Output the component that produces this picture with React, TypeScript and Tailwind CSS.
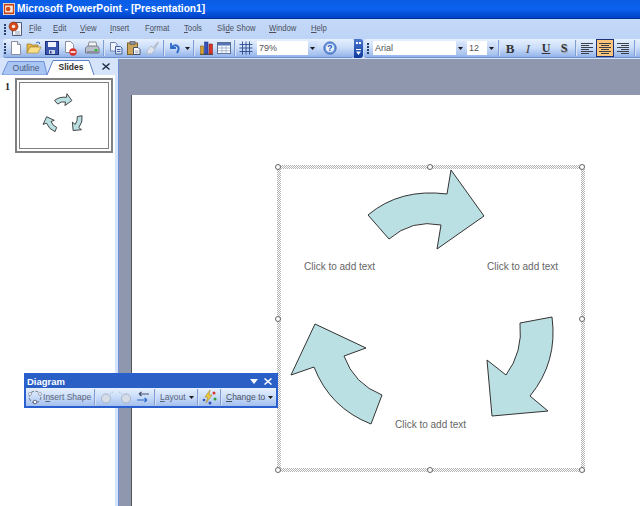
import React from "react";

const ui = { fontFamily: '"Liberation Sans", Arial, sans-serif' };

const Grip = ({ className = "" }: { className?: string }) => (
  <div className={`flex flex-col gap-[1px] shrink-0 w-[4px] items-center ${className}`}>
    <i className="block w-[2px] h-[2px] bg-[#27416f]" />
    <i className="block w-[2px] h-[2px] bg-[#27416f]" />
    <i className="block w-[2px] h-[2px] bg-[#27416f]" />
    <i className="block w-[2px] h-[2px] bg-[#27416f]" />
  </div>
);

const Sep = ({ w }: { w: string }) => (
  <div className={`flex justify-center shrink-0 ${w}`}>
    <i className="block w-[1px] h-[16px] bg-[#7f9ed6] border-r border-white/70 box-content" />
  </div>
);

const Btn = ({ children, className = "" }: { children: React.ReactNode; className?: string }) => (
  <div className={`w-[18px] h-[18px] flex items-center justify-center shrink-0 ${className}`}>{children}</div>
);

const Ic = ({ children, s = 16 }: { children: React.ReactNode; s?: number }) => (
  <svg width={s} height={s} viewBox="0 0 16 16">{children}</svg>
);

const Caret = () => (
  <svg width="5" height="3" viewBox="0 0 5 3" className="shrink-0"><path d="M0 0h5L2.500 3z" fill="#1a1a1a" /></svg>
);

const NewI = () => (
  <Ic><path d="M3.500 1.500h6l3 3v10h-9z" fill="#fff" stroke="#8a8f9c" /><path d="M9.500 1.500v3h3" fill="#dfe7f5" stroke="#8a8f9c" /></Ic>
);
const OpenI = () => (
  <Ic><path d="M1 13V4h4l1 1h6v2H4L1 13z" fill="#e6b64a" stroke="#9a7a24" strokeWidth=".7" /><path d="M1 13l3-6h11l-3 6z" fill="#fbe08a" stroke="#b08a2c" strokeWidth=".7" /><path d="M10 3q2-2 4 0l-1 1" fill="none" stroke="#3f6fc0" /></Ic>
);
const SaveI = () => (
  <Ic><rect x="1.500" y="1.500" width="13" height="13" fill="#3a55ae" stroke="#1d2f78" /><rect x="4" y="2" width="8" height="5" fill="#eef3fb" /><rect x="5" y="10" width="6" height="4" fill="#c9d3e8" /><rect x="6" y="11" width="1.500" height="2.500" fill="#2a3f8e" /></Ic>
);
const PermI = () => (
  <Ic><path d="M3.500 1.500h5l3 3v8h-8z" fill="#fff" stroke="#8a8f9c" /><circle cx="11" cy="12" r="3.700" fill="#d8302a" /><rect x="8.600" y="11.200" width="4.800" height="1.600" fill="#fff" /></Ic>
);
const PrintI = () => (
  <Ic><path d="M5 2h7l1 5H4z" fill="#f2f2f2" stroke="#767b88" strokeWidth=".8" /><path d="M1.500 8l2-2h10l1.500 2v5h-13.500z" fill="#b9bfcb" stroke="#636875" strokeWidth=".8" /><rect x="3" y="11" width="11" height="2.500" fill="#8a909e" /><rect x="10.500" y="9" width="3" height="2" fill="#36c03a" /></Ic>
);
const CopyI = () => (
  <Ic><path d="M2.500 2.500h5l1.500 1.500v7h-6.500z" fill="#eef3fb" stroke="#6e84ac" /><path d="M7.500 6.500h5l1.500 1.500v6h-6.500z" fill="#dce7f8" stroke="#45609a" /><path d="M9 9.500h3.500M9 11.500h3.500" stroke="#45609a" /></Ic>
);
const PasteI = () => (
  <Ic><rect x="1.500" y="3" width="10" height="11.500" fill="#c9a45a" stroke="#7d6228" /><rect x="4" y="1.500" width="5" height="3" fill="#8a8f9c" stroke="#555" strokeWidth=".6" /><path d="M7.500 7.500h4.500l2 2v5h-6.500z" fill="#fff" stroke="#46506a" /><path d="M9 11h3.500M9 12.800h3.500" stroke="#9aa5bc" /></Ic>
);
const PainterI = () => (
  <Ic><path d="M9 7l5-5.500 1 1L11 9z" fill="#b4bccb" /><path d="M3 14q-1-4 4-8l4 4q-3 5-8 4z" fill="#dee3ec" stroke="#aeb6c6" strokeWidth=".8" /></Ic>
);
const UndoI = () => (
  <Ic><path d="M4 3v5h5" fill="none" stroke="#2f6bc9" strokeWidth="1.800" /><path d="M4.500 7.500q3-3.500 6-1.500 2.500 2-.5 7" fill="none" stroke="#2f6bc9" strokeWidth="2" /></Ic>
);
const ChartI = () => (
  <Ic><rect x="2" y="14" width="13" height="1" fill="#555" /><rect x="2.500" y="6" width="3" height="8" fill="#d8a02a" stroke="#7a5d15" strokeWidth=".5" /><rect x="6.500" y="2" width="3.500" height="12" fill="#3452b6" stroke="#1d2f78" strokeWidth=".5" /><rect x="11" y="4" width="3.500" height="10" fill="#d8342a" stroke="#7a1d15" strokeWidth=".5" /></Ic>
);
const TableI = () => (
  <Ic><rect x="1.500" y="2.500" width="13" height="11" fill="#fff" stroke="#5a6f9a" /><rect x="2" y="3" width="12" height="2.500" fill="#5475b5" /><path d="M2 8h12M2 10.800h12M6 5.500v8M10 5.500v8" stroke="#9db0d2" strokeWidth=".9" /></Ic>
);
const GridI = () => (
  <Ic><path d="M1.500 4.500h13M1.500 8h13M1.500 11.500h13M4.500 1.500v13M8 1.500v13M11.500 1.500v13" stroke="#2d4a90" strokeWidth=".9" /></Ic>
);
const HelpI = () => (
  <svg width="14" height="14" viewBox="0 0 16 16">
    <circle cx="8" cy="8" r="7" fill="#6f9ade" stroke="#2f5fb0" />
    <circle cx="8" cy="8" r="4.700" fill="#eaf2fd" />
    <text x="8" y="11.500" textAnchor="middle" fontSize="10" fontWeight="700" fill="#1f52b0" style={ui}>?</text>
  </svg>
);
const AlignI = ({ kind }: { kind: "l" | "c" | "r" }) => {
  const d = {
    l: "M2 3.500h12M2 5.500h8M2 7.500h12M2 9.500h8M2 11.500h12M2 13.500h8",
    c: "M2 3.500h12M4 5.500h8M2 7.500h12M4 9.500h8M2 11.500h12M4 13.500h8",
    r: "M2 3.500h12M6 5.500h8M2 7.500h12M6 9.500h8M2 11.500h12M6 13.500h8",
  }[kind];
  return <Ic><path d={d} stroke="#3c4048" strokeWidth="1" /></Ic>;
};
const InsertShapeI = () => (
  <Ic><circle cx="8" cy="8" r="5.800" fill="none" stroke="#7a8496" strokeWidth="1.100" strokeDasharray="3 1.500" /><circle cx="8" cy="13" r="1.800" fill="#fff" stroke="#47506a" strokeWidth=".8" /><circle cx="3" cy="5" r="1.500" fill="#fff" stroke="#8a93a6" strokeWidth=".8" /><circle cx="13" cy="5" r="1.500" fill="#fff" stroke="#8a93a6" strokeWidth=".8" /></Ic>
);
const BackI = ({ flip }: { flip?: boolean }) => (
  <Ic>
    <g transform={flip ? "translate(16,0) scale(-1,1)" : undefined}>
      <circle cx="7" cy="9.500" r="4.500" fill="#d7dde8" stroke="#aab3c4" />
      <path d="M11 5q1.500-1.500 3-2" fill="none" stroke="#a9b3c6" strokeDasharray="1.500 1" />
    </g>
  </Ic>
);
const ReverseI = () => (
  <Ic><path d="M4 5h10M4 5l2.500-2M4 5l2.500 2" fill="none" stroke="#46506a" strokeWidth="1.200" /><path d="M12 11H2M12 11l-2.500-2M12 11l-2.500 2" fill="none" stroke="#2f6bc9" strokeWidth="1.200" /></Ic>
);
const AutoI = () => (
  <Ic><path d="M9 1L4 8h3l-2 6 6-8H8z" fill="#f5cf3c" stroke="#a5851c" strokeWidth=".6" /><circle cx="13" cy="4" r="1.500" fill="#d8342a" /><circle cx="14" cy="10" r="1.500" fill="#36a03a" /><circle cx="9" cy="14" r="1.500" fill="#3452b6" /><circle cx="3" cy="11" r="1.300" fill="#3452b6" /></Ic>
);

const AppIcon = () => (
  <svg width="12" height="12" viewBox="0 0 14 14" className="shrink-0">
    <rect x=".5" y=".5" width="13" height="13" fill="#c8421a" stroke="#f4e2d0" />
    <rect x="2.500" y="3" width="9" height="8" fill="#f6e8da" />
    <circle cx="6" cy="7" r="2.700" fill="#d2491c" />
  </svg>
);
const DocIcon = () => (
  <svg width="14" height="16" viewBox="0 0 14 16" className="shrink-0">
    <path d="M4.500 1.500h9v13h-9z" fill="#f5f7fc" stroke="#505a72" />
    <circle cx="5.500" cy="5.500" r="4.500" fill="#d2491c" stroke="#7a2a10" strokeWidth=".5" />
    <circle cx="5.500" cy="5.500" r="1.800" fill="#f7e4d4" />
    <path d="M7 11h5M7 13h5" stroke="#9aa5bc" />
  </svg>
);

const ArrowsSvg = ({ size, sw = 1 }: { size: number; sw?: number }) => (
  <svg width={size} height={size} viewBox="277 165 308 308" className="block">
    <g fill="#bbe0e3" stroke="#333" strokeWidth={sw}>
      <path d="M368 215Q400 188 447 194L451 170L484 216L437 249L441 225Q412 219 389 239Z" />
      <path d="M552 317Q558 362 530 396L548 411L492 416L487 360L506 375Q523 352 520 323Z" />
      <path d="M315 324L366 348L344 356Q354 384 382 395L371 424Q330 408 314 367L291 375Z" />
    </g>
  </svg>
);

const menus = [
  { u: "F", r: "ile", w: "w-[24px]" },
  { u: "E", r: "dit", w: "w-[27px]" },
  { u: "V", r: "iew", w: "w-[30px]" },
  { u: "I", r: "nsert", w: "w-[35px]" },
  { p: "F", u: "o", r: "rmat", w: "w-[39px]" },
  { u: "T", r: "ools", w: "w-[33px]" },
  { p: "Sli", u: "d", r: "e Show", w: "w-[52px]" },
  { u: "W", r: "indow", w: "w-[42px]" },
  { u: "H", r: "elp", w: "w-[30px]" },
];

const Combo = ({ text, w }: { text: string; w: string }) => (
  <div className={`h-[14px] flex bg-white shrink-0 ${w}`}>
    <span className="flex-1 pl-[2px] text-[9px] leading-[14px] text-[#555]">{text}</span>
    <div className="w-[9px] bg-gradient-to-b from-[#dbe7fb] to-[#a8c3ef] flex items-center justify-center">
      <Caret />
    </div>
  </div>
);

const Handle = ({ className }: { className: string }) => (
  <i className={`absolute block w-[6px] h-[6px] rounded-full bg-white border border-[#666] ${className}`} />
);

export default function App() {
  return (
    <div style={ui} className="relative w-[640px] h-[506px] overflow-hidden flex flex-col bg-[#8f97ae]">
      {/* Title bar */}
      <div className="h-[19px] shrink-0 flex items-center gap-[2px] pl-[3px] bg-gradient-to-b from-[#0a5ce4] via-[#0c62ee] to-[#0040c4] border-b border-[#00309c]">
        <AppIcon />
        <span className="inline-block origin-left scale-x-[.887] text-[11.5px] font-bold text-white leading-none whitespace-nowrap">Microsoft PowerPoint - [Presentation1]</span>
      </div>

      {/* Menu bar */}
      <div className="h-[20px] shrink-0 flex items-center bg-gradient-to-b from-[#c4d9f8] to-[#bed4f6]">
        <Grip className="ml-[3px]" />
        <div className="w-[15px] ml-[1px] shrink-0"><DocIcon /></div>
        <div className="w-[6px] shrink-0" />
        {menus.map((m) => (
          <div key={m.r} className={`shrink-0 h-[20px] pb-[2px] flex items-center ${m.w}`}>
            <span className="block origin-left scale-x-[.81] text-[9.5px] leading-none text-[#4a4f5c] whitespace-nowrap">
              {m.p}<u>{m.u}</u>{m.r}
            </span>
          </div>
        ))}
      </div>

      {/* Toolbars */}
      <div className="h-[20px] shrink-0 flex items-stretch bg-[#c4d9f8] border-b border-[#d6e4f9]">
        <div className="ml-[3px] w-[351px] shrink-0 flex items-center rounded-[3px] bg-gradient-to-b from-[#e6f0fd] via-[#c9dcf9] to-[#93b3e8] border-b border-[#6e8fce]">
          <Grip />
          <Btn><NewI /></Btn>
          <Btn><OpenI /></Btn>
          <Btn><SaveI /></Btn>
          <Btn><PermI /></Btn>
          <div className="w-[4px] shrink-0" />
          <Btn><PrintI /></Btn>
          <Sep w="w-[6px]" />
          <Btn><CopyI /></Btn>
          <Btn><PasteI /></Btn>
          <Btn><PainterI /></Btn>
          <Sep w="w-[5px]" />
          <Btn><UndoI /></Btn>
          <div className="w-[7px] flex justify-center shrink-0"><Caret /></div>
          <Sep w="w-[6px]" />
          <Btn><ChartI /></Btn>
          <Btn><TableI /></Btn>
          <Sep w="w-[4px]" />
          <Btn><GridI /></Btn>
          <div className="w-[2px] shrink-0" />
          <Combo text="79%" w="w-[60px]" />
          <div className="w-[4px] shrink-0" />
          <Btn><HelpI /></Btn>
        </div>
        <div className="w-[9px] shrink-0 flex flex-col items-center justify-between py-[3px] rounded-r-[3px] bg-gradient-to-b from-[#4a78d0] to-[#10389c]">
          <div className="flex gap-[1px]">
            <i className="block w-[2px] h-[2px] bg-white" />
            <i className="block w-[2px] h-[2px] bg-white" />
          </div>
          <svg width="5" height="6" viewBox="0 0 5 6"><path d="M0 0h5v1H0zM0 2.500h5L2.500 6z" fill="#fff" /></svg>
        </div>
        <div className="ml-[1px] flex-1 flex items-center rounded-l-[3px] bg-gradient-to-b from-[#e6f0fd] via-[#c9dcf9] to-[#93b3e8] border-b border-[#6e8fce] pl-[2px]">
          <Grip />
          <div className="w-[3px] shrink-0" />
          <Combo text="Arial" w="w-[92px]" />
          <div className="w-[2px] shrink-0" />
          <Combo text="12" w="w-[29px]" />
          <Sep w="w-[5px]" />
          <Btn><span className="text-[13px] font-bold leading-none text-[#333]" style={{ fontFamily: '"Liberation Serif", serif' }}>B</span></Btn>
          <Btn><span className="text-[13px] italic leading-none text-[#444]" style={{ fontFamily: '"Liberation Serif", serif' }}>I</span></Btn>
          <Btn><span className="text-[12px] font-bold underline leading-none text-[#333]" style={{ fontFamily: '"Liberation Serif", serif' }}>U</span></Btn>
          <Btn><span className="text-[12px] font-bold leading-none text-[#333] [text-shadow:1px_1px_0_#999]" style={{ fontFamily: '"Liberation Serif", serif' }}>S</span></Btn>
          <Sep w="w-[5px]" />
          <Btn><AlignI kind="l" /></Btn>
          <div className="w-[18px] h-[18px] flex items-center justify-center shrink-0 bg-[#fcc57a] border border-[#1f2f78]"><AlignI kind="c" /></div>
          <Btn><AlignI kind="r" /></Btn>
          <Sep w="w-[5px]" />
        </div>
      </div>

      {/* Main */}
      <div className="flex-1 flex min-h-0">
        {/* Left panel */}
        <div className="w-[119px] shrink-0 flex flex-col bg-[#d6e4fb] border-r border-[#6d90d6] pr-[3px]">
          <div className="h-[16px] shrink-0 flex items-end relative pl-[2px]">
            <div className="relative w-[45px] h-[14px] flex items-center justify-center">
              <svg className="absolute inset-0" width="45" height="14" viewBox="0 0 45 14"><path d="M0 14L6 .5h36l3 13.500z" fill="#a9c5f3" stroke="#6d90d6" /></svg>
              <span className="relative text-[8.5px] text-[#4a5a78] pl-[3px]">Outline</span>
            </div>
            <div className="relative w-[48px] h-[15px] flex items-center justify-center">
              <svg className="absolute inset-0" width="48" height="15" viewBox="0 0 48 15"><path d="M0 15L6 .5h36l5 14.500" fill="#fff" stroke="#5a7fc8" /></svg>
              <span className="relative text-[8.5px] font-bold text-[#333]">Slides</span>
            </div>
            <svg className="absolute left-[102px] top-[4px]" width="8" height="7" viewBox="0 0 8 7"><path d="M.5.5l7 6M7.500.5l-7 6" stroke="#1a2440" strokeWidth="1.300" /></svg>
          </div>
          <div className="flex-1 bg-white flex items-start pt-[3px]">
            <span className="w-[15px] shrink-0 text-center text-[10px] font-bold leading-none pt-[4px] text-[#222]" style={{ fontFamily: '"Liberation Serif", serif' }}>1</span>
            <div className="w-[98px] h-[75px] shrink-0 border-[2px] border-[#808080] p-[2px] bg-white">
              <div className="w-full h-full border border-[#808080] flex items-center justify-center">
                <ArrowsSvg size={46} sw={6} />
              </div>
            </div>
          </div>
        </div>

        {/* Workspace */}
        <div className="flex-1 min-w-0 pl-[12px] pt-[36px]">
          <div className="relative w-full h-full bg-white border-l border-[#555]">
            {/* Diagram frame on the slide canvas */}
            <div className="absolute left-[145px] top-[70px] w-[308px] h-[307px] p-[4px] [background-image:repeating-conic-gradient(#b4b4b4_0_25%,#ffffff_0_50%)] [background-size:2px_2px]">
              <div className="w-full h-full bg-white" />
              <div className="absolute inset-0"><ArrowsSvg size={308} /></div>
              <span className="absolute left-[27px] top-[95px] text-[10px] leading-[14px] text-[#666] whitespace-nowrap">Click to add text</span>
              <span className="absolute left-[210px] top-[95px] text-[10px] leading-[14px] text-[#666] whitespace-nowrap">Click to add text</span>
              <span className="absolute left-[118px] top-[253px] text-[10px] leading-[14px] text-[#666] whitespace-nowrap">Click to add text</span>
              <Handle className="left-[-2px] top-[-1px]" />
              <Handle className="left-[150px] top-[-1px]" />
              <Handle className="left-[302px] top-[-1px]" />
              <Handle className="left-[-2px] top-[151px]" />
              <Handle className="left-[302px] top-[151px]" />
              <Handle className="left-[-2px] top-[302px]" />
              <Handle className="left-[150px] top-[302px]" />
              <Handle className="left-[302px] top-[302px]" />
            </div>
          </div>
        </div>
      </div>

      {/* Floating Diagram toolbar */}
      <div className="absolute left-[24px] top-[373px] w-[254px] h-[35px] flex flex-col border-2 border-[#2a5fd0] bg-[#2a5fc6]">
        <div className="h-[13px] shrink-0 flex items-center pl-[1px] pr-[4px]">
          <span className="text-[9.5px] font-bold text-white leading-none flex-1">Diagram</span>
          <svg width="8" height="5" viewBox="0 0 8 5" className="mr-[6px]"><path d="M0 0h8L4 5z" fill="#fff" /></svg>
          <svg width="8" height="7" viewBox="0 0 8 7"><path d="M.5.5l7 6M7.500.5l-7 6" stroke="#fff" strokeWidth="1.500" /></svg>
        </div>
        <div className="flex-1 flex items-center bg-gradient-to-b from-[#e6f0fd] via-[#c9dcf9] to-[#a4c0ee]">
          <Btn><InsertShapeI /></Btn>
          <span className="text-[8.5px] text-[#5a6478] w-[49px] -ml-[1px] shrink-0 whitespace-nowrap">I<u>n</u>sert Shape</span>
          <Sep w="w-[6px]" />
          <Btn><BackI /></Btn>
          <Btn><BackI flip /></Btn>
          <Btn><ReverseI /></Btn>
          <Sep w="w-[6px]" />
          <span className="text-[8.5px] text-[#5a6478] w-[31px] shrink-0 pl-[2px] whitespace-nowrap"><u>L</u>ayout</span>
          <Caret />
          <Sep w="w-[8px]" />
          <Btn className="-ml-[2px]"><AutoI /></Btn>
          <Sep w="w-[6px]" />
          <span className="text-[8.5px] text-[#4a5264] w-[44px] shrink-0 pl-[2px] whitespace-nowrap"><u>C</u>hange to</span>
          <Caret />
        </div>
      </div>
    </div>
  );
}
